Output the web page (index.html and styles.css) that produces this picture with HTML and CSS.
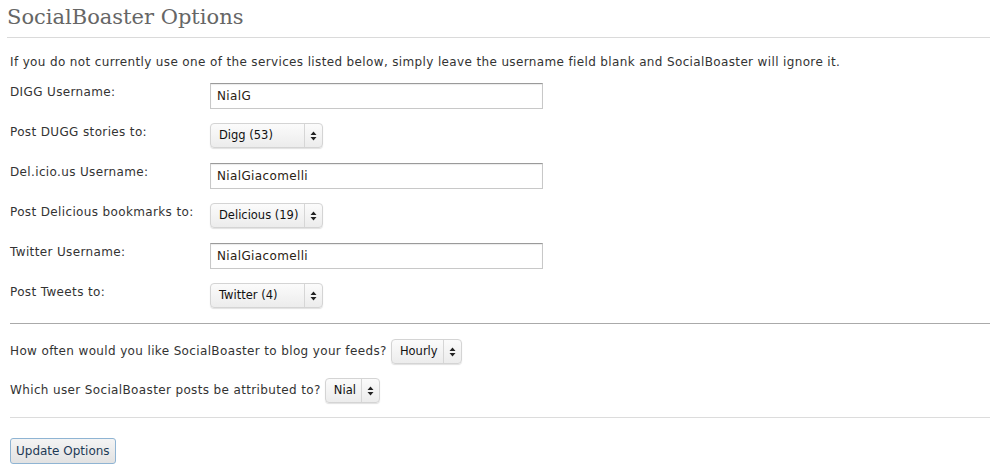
FILE: index.html
```html
<!DOCTYPE html>
<html>
<head>
<meta charset="utf-8">
<link rel="stylesheet" href="styles.css">
</head>
<body>
<div class="page">
  <h2 class="title">SocialBoaster Options</h2>
  <div class="content">
    <p class="intro">If you do not currently use one of the services listed below, simply leave the username field blank and SocialBoaster will ignore it.</p>
    <div class="form-grid">
      <label class="lbl">DIGG Username:</label>
      <div class="field"><span class="text-input">NialG</span></div>
      <label class="lbl">Post DUGG stories to:</label>
      <div class="field"><span class="select w113"><span class="sel-text">Digg (53)</span><span class="sel-arrow"><svg width="7" height="10" viewBox="0 0 7 10"><path d="M3.5 0.5L6.5 4H0.5Z M3.5 9.5L6.5 6H0.5Z" fill="#222"/></svg></span></span></div>
      <label class="lbl">Del.icio.us Username:</label>
      <div class="field"><span class="text-input">NialGiacomelli</span></div>
      <label class="lbl">Post Delicious bookmarks to:</label>
      <div class="field"><span class="select w113"><span class="sel-text">Delicious (19)</span><span class="sel-arrow"><svg width="7" height="10" viewBox="0 0 7 10"><path d="M3.5 0.5L6.5 4H0.5Z M3.5 9.5L6.5 6H0.5Z" fill="#222"/></svg></span></span></div>
      <label class="lbl">Twitter Username:</label>
      <div class="field"><span class="text-input">NialGiacomelli</span></div>
      <label class="lbl">Post Tweets to:</label>
      <div class="field"><span class="select w113"><span class="sel-text">Twitter (4)</span><span class="sel-arrow"><svg width="7" height="10" viewBox="0 0 7 10"><path d="M3.5 0.5L6.5 4H0.5Z M3.5 9.5L6.5 6H0.5Z" fill="#222"/></svg></span></span></div>
    </div>
    <hr class="rule dark">
    <div class="inline-row">How often would you like SocialBoaster to blog your feeds? <span class="select"><span class="sel-text">Hourly</span><span class="sel-arrow"><svg width="7" height="10" viewBox="0 0 7 10"><path d="M3.5 0.5L6.5 4H0.5Z M3.5 9.5L6.5 6H0.5Z" fill="#222"/></svg></span></span></div>
    <div class="inline-row">Which user SocialBoaster posts be attributed to? <span class="select"><span class="sel-text">Nial</span><span class="sel-arrow"><svg width="7" height="10" viewBox="0 0 7 10"><path d="M3.5 0.5L6.5 4H0.5Z M3.5 9.5L6.5 6H0.5Z" fill="#222"/></svg></span></span></div>
    <hr class="rule">
    <button class="btn">Update Options</button>
  </div>
</div>
</body>
</html>
```
FILE: styles.css
```css
html, body { margin: 0; padding: 0; background: #fff; }
body { font-family: "DejaVu Sans", "Lucida Grande", sans-serif; font-size: 12px; letter-spacing: 0.36px; color: #333; }
.page { padding: 0 1px 0 7px; }
.title {
  font-family: "DejaVu Serif", Georgia, serif;
  font-weight: normal;
  font-size: 21px;
  letter-spacing: 0;
  color: #666;
  margin: 0;
  padding: 5px 0 0 0;
  height: 32px;
  border-bottom: 1px solid #dadada;
}
.content { padding: 0 0 0 3px; }
.intro { margin: 16px 0 0 0; line-height: 16px; }
.form-grid {
  display: grid;
  grid-template-columns: 200px 1fr;
  grid-auto-rows: 40px;
  margin-top: 6px;
}
.lbl { padding-top: 8px; line-height: 16px; }
.field { padding-top: 7px; }
.text-input {
  display: block;
  box-sizing: border-box;
  width: 333px;
  height: 26px;
  border: 1px solid #c8c8c8;
  border-top-color: #9a9a9a;
  box-shadow: inset 0 1px 1px rgba(0,0,0,0.08);
  padding: 4px 6px;
  line-height: 16px;
  font-size: 12px;
  color: #2a2212;
  background: #fff;
}
.select {
  display: inline-flex;
  align-items: stretch;
  box-sizing: border-box;
  height: 25px;
  border: 1px solid #d4d4d4;
  border-radius: 4px;
  background: linear-gradient(#fbfbfb, #ececec);
  box-shadow: 0 1px 1px rgba(0,0,0,0.12);
  vertical-align: middle;
  color: #111;
  font-size: 11.5px;
  letter-spacing: 0;
}
.w113 { width: 113px; }
.sel-text { flex: 1; padding: 0 5px 0 8px; line-height: 23px; white-space: nowrap; }
.sel-arrow { width: 17px; flex: none; border-left: 1px solid #d6d6d6; display: flex; align-items: center; justify-content: center; }
.rule { border: 0; border-top: 1px solid #dcdcdc; margin: 0; height: 0; }
.rule.dark { border-top-color: #aaaaaa; margin-top: 7px; }
.inline-row { margin-top: 15px; line-height: 18px; height: 24px; }
.inline-row + .rule { margin-top: 15px; }
.btn {
  margin-top: 20px;
  font-family: "DejaVu Sans", "Lucida Grande", sans-serif;
  font-size: 12px;
  letter-spacing: 0;
  color: #1e3a56;
  height: 26px;
  padding: 0 5px;
  border: 1px solid #8fb4d3;
  border-radius: 3px;
  background: linear-gradient(#f4f4f4, #e2e2e2);
}
```
